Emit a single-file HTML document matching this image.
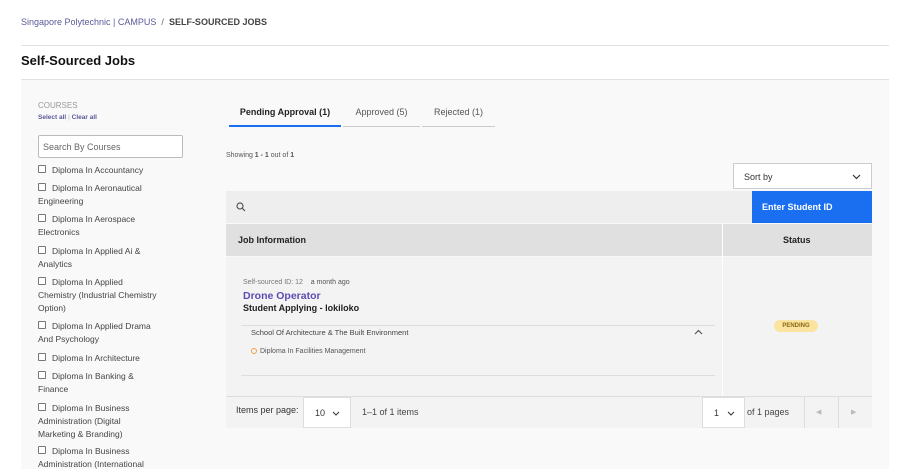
<!DOCTYPE html><html><head><style>
*{box-sizing:border-box;margin:0;padding:0}
body{width:912px;height:469px;overflow:hidden;background:#fff;font-family:"Liberation Sans",Arial,sans-serif;color:#333;position:relative}
.a{position:absolute}
.cb{position:absolute;left:38px;width:8px;height:8px;border:1px solid #777;border-radius:1px;background:#fff}
.ct{position:absolute;left:38px;font-size:8.5px;line-height:13px;color:#444;width:122px;text-indent:14px}
</style></head><body>
<div class="a" style="left:21px;top:17px;font-size:9px;color:#5a5a9a">Singapore Polytechnic | CAMPUS &nbsp;<span style="color:#666">/</span>&nbsp; <b style="color:#444">SELF-SOURCED JOBS</b></div>
<div class="a" style="left:21px;top:45px;width:868px;height:1px;background:#e2e2e2"></div>
<div class="a" style="left:21px;top:53px;font-size:13px;font-weight:bold;color:#111">Self-Sourced Jobs</div>
<div class="a" style="left:21px;top:79px;width:868px;height:1px;background:#e2e2e2"></div>
<div class="a" style="left:21px;top:80px;width:868px;height:389px;background:#f9f9f9"></div>
<div class="a" style="left:38px;top:101px;font-size:8px;color:#999">COURSES</div>
<div class="a" style="left:38px;top:114px;font-size:6.5px;font-weight:bold;color:#5a5a9a">Select all <span style="color:#ccc">|</span> Clear all</div>
<div class="a" style="left:38px;top:135px;width:145px;height:23px;border:1px solid #bbb;border-radius:2px;background:#fff;font-size:9px;color:#666;padding:6px 4px">Search By Courses</div>
<div class="cb" style="top:165px"></div><div class="ct" style="top:164px">Diploma In Accountancy</div>
<div class="cb" style="top:183px"></div><div class="ct" style="top:182px">Diploma In Aeronautical Engineering</div>
<div class="cb" style="top:214px"></div><div class="ct" style="top:213px">Diploma In Aerospace Electronics</div>
<div class="cb" style="top:246px"></div><div class="ct" style="top:245px">Diploma In Applied Ai &amp; Analytics</div>
<div class="cb" style="top:277px"></div><div class="ct" style="top:276px">Diploma In Applied Chemistry (Industrial Chemistry Option)</div>
<div class="cb" style="top:321px"></div><div class="ct" style="top:320px">Diploma In Applied Drama And Psychology</div>
<div class="cb" style="top:353px"></div><div class="ct" style="top:352px">Diploma In Architecture</div>
<div class="cb" style="top:371px"></div><div class="ct" style="top:370px">Diploma In Banking &amp; Finance</div>
<div class="cb" style="top:403px"></div><div class="ct" style="top:402px;width:115px">Diploma In Business Administration (Digital Marketing &amp; Branding)</div>
<div class="cb" style="top:446px"></div><div class="ct" style="top:445px">Diploma In Business Administration (International</div>
<div class="a" style="left:229px;top:107px;width:112px;font-size:9px;font-weight:bold;color:#222;text-align:center">Pending Approval (1)</div>
<div class="a" style="left:229px;top:125px;width:112px;height:2px;background:#1a6ff0"></div>
<div class="a" style="left:343px;top:107px;width:77px;font-size:9px;color:#555;text-align:center">Approved (5)</div>
<div class="a" style="left:343px;top:126px;width:77px;height:1px;background:#ccc"></div>
<div class="a" style="left:422px;top:107px;width:73px;font-size:9px;color:#555;text-align:center">Rejected (1)</div>
<div class="a" style="left:422px;top:126px;width:73px;height:1px;background:#ccc"></div>
<div class="a" style="left:226px;top:152px;font-size:7px;color:#555">Showing <b>1 - 1</b> out of <b>1</b></div>
<div class="a" style="left:733px;top:163px;width:139px;height:26px;border:1px solid #ccc;background:#fff;font-size:9px;color:#333;padding:8px 10px">Sort by<svg style="position:absolute;right:10px;top:10px" width="9" height="6"><path d="M1 1L4.5 4.5L8 1" stroke="#333" fill="none" stroke-width="1.2"/></svg></div>
<div class="a" style="left:226px;top:191px;width:526px;height:32px;background:#eee"></div>
<svg class="a" style="left:236px;top:202px" width="10" height="10"><circle cx="4" cy="4" r="3" stroke="#555" fill="none" stroke-width="1.2"/><line x1="6.3" y1="6.3" x2="9" y2="9" stroke="#555" stroke-width="1.2"/></svg>
<div class="a" style="left:752px;top:191px;width:120px;height:32px;background:#1a6ff0;color:#fff;font-size:9px;font-weight:bold;padding:11px 10px">Enter Student ID</div>
<div class="a" style="left:226px;top:224px;width:646px;height:32px;background:#e0e0e0"></div>
<div class="a" style="left:722px;top:224px;width:1px;height:172px;background:#fff"></div>
<div class="a" style="left:238px;top:235px;font-size:9px;font-weight:bold;color:#222">Job Information</div>
<div class="a" style="left:783px;top:235px;font-size:9px;font-weight:bold;color:#222">Status</div>
<div class="a" style="left:226px;top:257px;width:496px;height:139px;background:#f3f3f3"></div>
<div class="a" style="left:723px;top:257px;width:149px;height:139px;background:#f3f3f3"></div>
<div class="a" style="left:243px;top:279px;font-size:7px;color:#777">Self-sourced ID: 12 &nbsp;&nbsp;&nbsp;<span style="color:#555">a month ago</span></div>
<div class="a" style="left:243px;top:290px;font-size:10.5px;font-weight:bold;color:#5a4db0">Drone Operator</div>
<div class="a" style="left:243px;top:303px;font-size:9px;font-weight:bold;color:#222">Student Applying - lokiloko</div>
<div class="a" style="left:241px;top:325px;width:474px;height:1px;background:#ddd"></div>
<div class="a" style="left:251px;top:328px;font-size:7.5px;color:#444">School Of Architecture &amp; The Built Environment</div>
<svg class="a" style="left:694px;top:329px" width="9" height="6"><path d="M1 5L4.5 1.5L8 5" stroke="#555" fill="none" stroke-width="1.2"/></svg>
<div class="a" style="left:251px;top:348px;width:6px;height:6px;border:1px solid #f0a040;border-radius:50%"></div>
<div class="a" style="left:260px;top:348px;font-size:7px;color:#555">Diploma In Facilities Management</div>
<div class="a" style="left:241px;top:375px;width:474px;height:1px;background:#ddd"></div>
<div class="a" style="left:774px;top:320px;width:44px;height:12px;border-radius:6px;background:#fbe3a0;color:#8a6a10;font-size:6px;font-weight:bold;text-align:center;line-height:12px">PENDING</div>
<div class="a" style="left:226px;top:396px;width:646px;height:32px;background:#f3f3f3;border-top:1px solid #ddd"></div>
<div class="a" style="left:236px;top:405px;font-size:9px;color:#333">Items per page:</div>
<div class="a" style="left:303px;top:397px;width:48px;height:31px;background:#fff;border:1px solid #ddd;font-size:9px;padding:10px 11px">10<svg style="position:absolute;left:28px;top:13px" width="8" height="5"><path d="M1 1L4 4L7 1" stroke="#333" fill="none" stroke-width="1"/></svg></div>
<div class="a" style="left:362px;top:407px;font-size:9px;color:#444">1–1 of 1 items</div>
<div class="a" style="left:702px;top:397px;width:43px;height:31px;background:#fff;border:1px solid #ddd;font-size:9px;padding:10px 11px">1<svg style="position:absolute;left:24px;top:13px" width="8" height="5"><path d="M1 1L4 4L7 1" stroke="#333" fill="none" stroke-width="1"/></svg></div>
<div class="a" style="left:747px;top:407px;font-size:9px;color:#444">of 1 pages</div>
<div class="a" style="left:804px;top:397px;width:1px;height:31px;background:#ddd"></div>
<div class="a" style="left:838px;top:397px;width:1px;height:31px;background:#ddd"></div>
<div class="a" style="left:816px;top:408px;font-size:7px;color:#bbb">&#9664;</div>
<div class="a" style="left:851px;top:408px;font-size:7px;color:#bbb">&#9654;</div>
</body></html>
